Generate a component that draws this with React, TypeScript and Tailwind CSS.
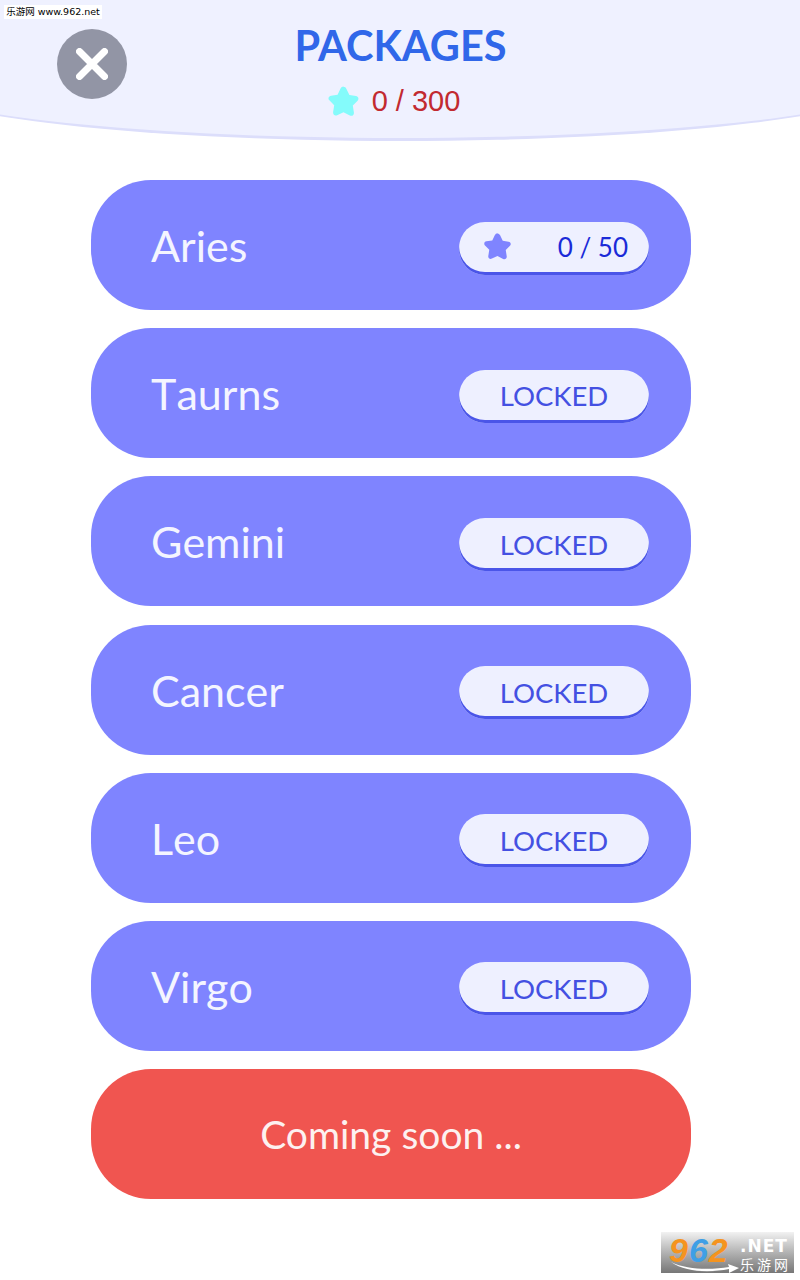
const StarShape = ({ className }: { className?: string }) => (
  <svg viewBox="0 0 32 32" className={className}>
    <path
      d="M16 2.500c1.300 0 2.100.8 2.700 2l2.700 5.600 6 .9c2.200.3 3 2.700 1.500 4.200l-4.400 4.500 1 6.300c.4 2.300-1.700 3.800-3.700 2.800L16 25.800l-5.800 2.700c-2 1-4.100-.5-3.700-2.800l1-6.300-4.400-4.500c-1.500-1.500-.7-3.900 1.500-4.200l6-.9 2.700-5.600c.6-1.200 1.400-2 2.700-2z"
      fill="currentColor"
    />
  </svg>
);

const rows = ["Taurns", "Gemini", "Cancer", "Leo", "Virgo"];

const Row = ({ name, children }: { name: string; children: React.ReactNode }) => (
  <div className="h-[130px] rounded-[60px] bg-[#7f84ff] flex items-center justify-between pl-[60px] pr-[42px]">
    <span className="text-[43px] leading-none text-[#f4f5ff] mt-[1px] [font-kerning:none]">{name}</span>
    {children}
  </div>
);

export default function App() {
  return (
    <div
      className="relative w-[800px] h-[1280px] bg-white overflow-hidden"
      style={{ fontFamily: "Lato, sans-serif" }}
    >
      <div className="h-[141px] overflow-hidden">
        <header className="relative w-[1000px] -ml-[100px] h-[141px] bg-[#eff1ff] border-b-[3px] border-[#dcdefb] rounded-b-[50%_62px] flex flex-col items-center">
          <div className="absolute left-[157px] top-[29px] w-[70px] h-[70px] rounded-full bg-[#9295a5] flex items-center justify-center">
            <svg viewBox="0 0 32 32" className="w-[32px] h-[32px]">
              <path d="M3.500 3.500 L28.500 28.500 M28.500 3.500 L3.500 28.500" stroke="white" strokeWidth="7" strokeLinecap="round" fill="none" />
            </svg>
          </div>
          <h1 className="mt-[21px] text-[41.500px] leading-[48px] font-bold text-[#3067e9] ml-[1px]">PACKAGES</h1>
          <div className="mt-[14px] flex items-center gap-[11px] h-[36px] -ml-[14px]">
            <StarShape className="w-[35px] h-[35px] text-[#84fbfb]" />
            <span className="text-[29px] leading-none text-[#c22a30]" style={{ fontFamily: "'Liberation Sans', sans-serif" }}>
              0 / 300
            </span>
          </div>
        </header>
      </div>

      <main className="mt-[39px] ml-[91px] w-[600px] flex flex-col gap-[18.2px]">
        <Row name="Aries">
          <div className="mt-[6px] w-[190px] h-[53px] rounded-[26px] bg-[#eef0ff] shadow-[inset_0_-3px_0_#4a55e8] flex items-center justify-between pl-[23px] pr-[21px] pb-[3px]">
            <StarShape className="w-[31px] h-[31px] text-[#7f84ff]" />
            <span className="text-[26px] leading-none text-[#1a2ad8]">0 / 50</span>
          </div>
        </Row>
        {rows.map((r) => (
          <Row key={r} name={r}>
            <div className="mt-[6px] w-[190px] h-[53px] rounded-[26px] bg-[#eef0ff] shadow-[inset_0_-3px_0_#4a55e8] flex items-center justify-center">
              <span className="text-[27.500px] leading-none text-[#4450e2]">LOCKED</span>
            </div>
          </Row>
        ))}
        <div className="h-[130px] rounded-[60px] bg-[#f05550] flex items-center justify-center">
          <span className="text-[39px] leading-none text-[#fdf1f0] mt-[1px]">Coming soon ...</span>
        </div>
      </main>

      <div
        className="absolute left-[4px] top-[5px] w-[98px] h-[14px] bg-white flex items-center justify-center text-[9.500px] text-black whitespace-nowrap"
        style={{ fontFamily: "'DejaVu Sans', 'Noto Sans CJK SC', sans-serif" }}
      >
        乐游网 www.962.net
      </div>

      <div className="absolute left-[661px] top-[1232px] w-[133px] h-[41px] bg-gradient-to-b from-[#f2f2f2] to-[#777777] flex items-start pl-[8px]">
        <div className="relative w-[71px] h-[41px] shrink-0">
          <span
            className="block text-[34px] leading-[36px] font-bold italic text-[#f5941f] tracking-[1px]"
            style={{ fontFamily: "'Liberation Sans', sans-serif" }}
          >
            9<span className="text-[#3f9fe6]">6</span>2
          </span>
          <svg viewBox="0 0 70 12" className="absolute left-0 top-[29px] w-[70px] h-[12px]">
            <path d="M2 1 C 18 9, 42 9, 60 6 L 59 3 L 70 7 L 60 12 L 60 8 C 40 12, 16 11, 2 1 Z" fill="#ffffff" />
          </svg>
        </div>
        <div className="flex flex-col items-start leading-none pt-[5px] w-[52px] shrink-0">
          <span className="text-[17px] leading-[19px] font-bold tracking-[1px] text-white" style={{ fontFamily: "'DejaVu Sans', sans-serif" }}>.NET</span>
          <span className="text-[14px] leading-[16px] text-white tracking-[3px] whitespace-nowrap" style={{ fontFamily: "'Noto Sans CJK SC', sans-serif" }}>乐游网</span>
        </div>
      </div>
    </div>
  );
}
